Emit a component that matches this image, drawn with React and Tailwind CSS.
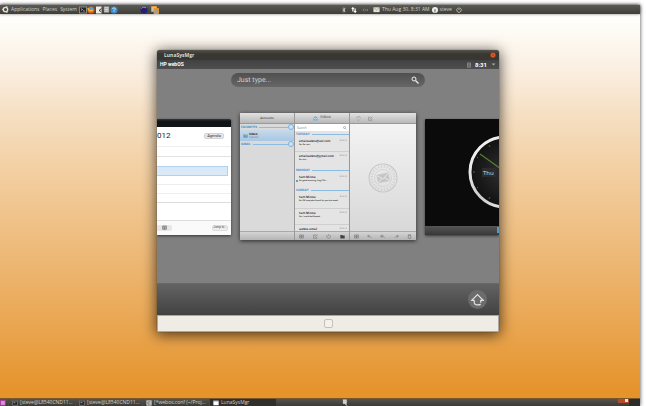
import React from "react";

function Icon({ className = "", children, label }) {
  return (
    <svg viewBox="0 0 16 16" className={"shrink-0 " + className} fill="none" stroke="currentColor" strokeWidth="2" role="img" aria-label={label}>
      {children}
    </svg>
  );
}

function TopPanel() {
  return (
    <header className="flex h-[9px] shrink-0 items-center bg-linear-to-b from-[#5b5b54] to-[#3f3e39] text-[5px] leading-none text-[#d5d1c8] shadow-[0_0_3px_#0008]">
      <nav className="flex flex-1 items-center pl-[2px]">
        <Icon label="Ubuntu" className="mr-[2px] size-[7px] text-[#e5e1d8]">
          <circle cx="8" cy="8" r="5" strokeWidth="3" />
          <circle cx="2" cy="8" r="1" /><circle cx="11" cy="2" r="1" /><circle cx="11" cy="14" r="1" />
        </Icon>
        <button className="mr-[3px]">Applications</button>
        <button className="mr-[3px]">Places</button>
        <button className="mr-[2px]">System</button>
        <Icon label="Terminal" className="size-[8px]">
          <rect x="1" y="2" width="14" height="12" fill="#252a28" stroke="#888" />
          <path d="M4 5l3 2-3 2M8 10h4" stroke="#fff" strokeWidth="1" />
        </Icon>
        <Icon label="Firefox" className="size-[8px]">
          <circle cx="8" cy="8" r="7" fill="#df5a18" stroke="none" />
          <circle cx="8" cy="6" r="4" fill="#4ba2dc" stroke="none" />
          <path d="M2 4c1 6 5 7 10 4" stroke="#fbb02f" strokeWidth="3" />
        </Icon>
        <Icon label="Text editor" className="size-[8px]">
          <path d="M2 1h11v14H2z" fill="#ecece6" stroke="none" />
          <path d="M13 5L8 9l4 2" stroke="#333" />
        </Icon>
        <Icon label="Calculator" className="size-[7px]">
          <path d="M2 1h12v14H2z" fill="#aaa" stroke="none" />
          <path d="M4 4h8M4 8h8M4 12h8" stroke="#ddd" />
        </Icon>
        <Icon label="Help" className="size-[8px]">
          <circle cx="8" cy="8" r="7" fill="#3f8cca" stroke="none" />
          <path d="M5 6c1-4 7-2 5 1L8 9v2" stroke="#d5edff" />
        </Icon>
        <Icon label="Eclipse" className="ml-[22px] size-[8px]">
          <circle cx="8" cy="8" r="7" fill="#24206e" stroke="none" />
          <path d="M3 5c2-3 6-4 9-1" stroke="#aaa8df" />
        </Icon>
        <Icon label="Virtual machine" className="ml-[3px] size-[8px]">
          <path d="M1 1h10v10H1z" fill="#cfc2ad" stroke="#e6942f" />
          <path d="M6 5h9v10H6z" fill="#98a0a5" stroke="#e6942f" />
        </Icon>
      </nav>
      <div className="flex w-[299px] items-center">
        <Icon label="Bluetooth" className="size-[6px]"><path d="M4 5l7 6-3 3V2l3 3-7 6" /></Icon>
        <Icon label="Network" className="ml-[4px] size-[6px] text-white"><path d="M5 12V2M2 5l3-3 3 3M11 4v10M8 11l3 3 3-3" strokeWidth="3" /></Icon>
        <Icon label="Sound" className="ml-[5px] size-[6px] text-[#999]"><path d="M6 4L2 8l4 4M10 6v4M14 5v6" /></Icon>
        <Icon label="Mail" className="ml-[5px] size-[7px]"><path d="M1 3h14v11H1z" fill="#e5e1d8" stroke="none" /><path d="M2 4l6 5 6-5" stroke="#666" strokeWidth="1" /></Icon>
        <time className="ml-[2px] whitespace-nowrap">Thu Aug 30, 8:31 AM</time>
        <Icon label="User" className="mr-[2px] ml-[2px] size-[6px]"><circle cx="8" cy="8" r="8" fill="#eee" stroke="none" /><circle cx="8" cy="8" r="2" fill="#555" stroke="none" /><path d="M8 9v6" stroke="#555" /></Icon>
        <span>steve</span>
        <Icon label="Power" className="ml-[4px] size-[6px]"><path d="M5 3a6 6 0 1 0 6 0M8 1v7" /></Icon>
      </div>
    </header>
  );
}

function CalendarCard() {
  return (
    <article className="flex h-[116px] w-[74px] shrink-0 flex-col overflow-hidden rounded-r-[1px] bg-white font-[Roboto,sans-serif] shadow-[0_1px_3px_#0009]">
      <div className="h-[8px] shrink-0 bg-linear-to-b from-[#35383a] to-[#111517] to-30%" />
      <div className="flex h-[18px] shrink-0 items-center justify-between pr-[7px] text-[8px] leading-none text-[#222]">
        <h2>012</h2>
        <button className="h-[6px] w-[20px] rounded-[2px] border border-[#d4d4d4] bg-[#e6e6e6] text-[4px] leading-none text-[#333]">Agenda</button>
      </div>
      <div className="h-[2px] shrink-0 border-b border-[#eee]" />
      <div className="h-[10px] shrink-0 border-b border-[#e3e3e3]" />
      <div className="h-[9px] shrink-0" />
      <div className="mr-[3px] h-[10px] shrink-0 border border-l-0 border-[#b4d2ee] bg-[#d9e9f8]" />
      <div className="h-[9px] shrink-0 border-b border-[#eee]" />
      <div className="h-[9px] shrink-0 border-b border-[#eee]" />
      <div className="h-[9px] shrink-0 border-b border-[#ddd]" />
      <div className="h-[18px] shrink-0 border-b border-[#ddd]" />
      <footer className="flex flex-1 items-center justify-between bg-[#fafafa] pr-[3px]">
        <button aria-label="Month" className="flex h-[6px] w-[15px] items-center justify-center rounded-r-[2px] bg-[#e6e6e6] text-[#666]">
          <Icon className="size-[5px]"><path d="M2 3h12v11H2zM2 6h12M2 10h12M8 6v8" /></Icon>
        </button>
        <button className="h-[6px] w-[16px] rounded-[2px] border border-[#ddd] bg-[#eee] text-[3px] leading-none whitespace-nowrap text-[#444]">Jump to...</button>
      </footer>
    </article>
  );
}

function Divider({ children, knob }) {
  return (
    <div className="flex h-[6px] shrink-0 items-center gap-[2px] pl-[1px] text-[3px] leading-none font-bold text-[#3d8fca]">
      <span>{children}</span>
      <span className="h-px flex-1 bg-[#8abce4]" />
      {knob && <span className="-ml-[2px] size-[6px] rounded-full border border-[#78b1e0] bg-[#cfe3f5]" />}
    </div>
  );
}

function Message({ from, subject, size = "h-[16px] border-b", unread }) {
  return (
    <div className={size + " shrink-0 border-[#cfcfcf] pt-[2px] pr-[2px] pl-[4px] whitespace-nowrap text-[#111]"}>
      <div className="flex items-center justify-between text-[3px] leading-[4px]">
        <span className="font-semibold">{from}</span>
        <span className="text-[2px] text-[#777]">8/30/12</span>
      </div>
      {subject && (
        <div className="flex items-center text-[2px] leading-[4px] font-semibold text-[#111]">
          {unread && <span className="-ml-[3px] mr-px size-[2px] rounded-full bg-[#318ac9]" />}
          {subject}
        </div>
      )}
    </div>
  );
}

const bar = "flex h-[11px] shrink-0 items-center bg-linear-to-b from-[#e2e2e2] to-[#b8b8b8] border-b border-[#999] text-[#444] ";
const foot = "flex h-[9px] shrink-0 items-center justify-around bg-linear-to-b from-[#d5d5d5] to-[#b5b5b5] border-t border-[#aaa] text-[#777] ";

function MailCard() {
  return (
    <article className="flex h-[127px] w-[176px] shrink-0 overflow-hidden rounded-[1px] bg-[#dadada] text-[4px] leading-none shadow-[0_1px_4px_#000a] [text-rendering:geometricPrecision]">
      <section className="flex w-[55px] flex-col border-r border-[#999]">
        <h2 className={bar + "justify-center text-[3px] font-semibold"}>Accounts</h2>
        <Divider knob>FAVORITES</Divider>
        <div className="flex h-[11px] shrink-0 items-center gap-px bg-linear-to-b from-[#c6d9ea] to-[#a8c7e3] pl-[3px] text-[#222]">
          <Icon className="size-[5px]"><path d="M1 5h14v10H1z" fill="#5d9ed3" stroke="none" /><path d="M5 3l4 5 5-3" stroke="#edc948" /></Icon>
          <div className="text-[3px]">
            <p className="font-bold">Inbox</p>
            <p className="text-[#777]">Yahoo!</p>
          </div>
        </div>
        <Divider knob>GMAIL</Divider>
        <div className="flex-1" />
        <div className={foot} />
      </section>
      <section className="flex w-[55px] flex-col border-r border-[#999] bg-[#e4e4e4]">
        <h2 className={bar + "justify-center gap-[2px] text-[4px]"}>
          <Icon className="size-[5px]"><path d="M1 5l7-4 7 4v9H1z" fill="#68afe2" stroke="none" /><path d="M2 6l6 4 6-4" stroke="#fff" /></Icon>
          Inbox
        </h2>
        <label className="flex h-[7px] shrink-0 items-center bg-white px-[2px] text-[#777]">
          <input aria-label="Search mail" placeholder="Search" className="h-full w-0 flex-1 bg-transparent text-[3px] leading-none outline-none placeholder:text-[#777]" />
          <Icon className="size-[4px]"><circle cx="6" cy="6" r="4" /><path d="M9 9l5 5" /></Icon>
        </label>
        <div className="flex flex-1 flex-col">
          <Divider>TUESDAY</Divider>
          <Message from="emailwebos@aol.com" subject="Fw: Re: test" size="h-[15px] border-b" />
          <Message from="emailwebos@gmail.com" subject="Re: test" size="h-[15px]" />
          <Divider>MONDAY</Divider>
          <Message from="Sam Minow" subject="Re: good morning, Aug 27th..." size="h-[14px]" unread />
          <Divider>SUNDAY</Divider>
          <Message from="Sam Minow" subject="Re: FW new jobs found for you this week" />
          <Message from="Sam Minow" subject="Fw: I could be Blessed" />
          <Message from="webos.email" size="h-[6px]" />
        </div>
        <div className={foot}>
          <Icon className="size-[5px]"><path d="M2 3h12v10H2zM2 8h12M8 3v10" /></Icon>
          <Icon className="size-[5px]"><path d="M12 9v5H2V3h8M7 9l8-7" /></Icon>
          <Icon className="size-[5px]"><path d="M4 3a6 6 0 1 0 8 0M8 1v5" /></Icon>
          <Icon className="size-[5px]"><path d="M1 3h6l2 2h6v9H1z" fill="#444" stroke="none" /></Icon>
        </div>
      </section>
      <section className="flex flex-1 flex-col">
        <div className={bar + "gap-[7px] pl-[6px]"}>
          <Icon label="Refresh" className="size-[5px] text-[#888]"><path d="M2 7c1-7 11-7 12 0M11 12c-2 3-6 2-7 0" /></Icon>
          <Icon label="Compose" className="size-[5px] text-[#888]"><path d="M12 9v5H2V4h6M6 10l8-8" /></Icon>
        </div>
        <div className="flex flex-1 items-center justify-center bg-linear-to-b from-[#f3f3f3] to-[#d8d8d8]">
          <svg viewBox="0 0 60 60" className="size-[30px] -rotate-12 text-[#c6c6c6]" fill="none" stroke="currentColor">
            <circle cx="30" cy="30" r="28" strokeWidth="2" />
            <circle cx="30" cy="30" r="23" strokeWidth="5" strokeDasharray="3 3" opacity=".55" />
            <circle cx="30" cy="30" r="17" strokeWidth="1" />
            <path d="M19 22h23v16H19z" fill="currentColor" />
            <path d="M19 23l11 9 12-9M19 38l8-8M42 38l-9-8" stroke="#eee" strokeWidth="1.5" />
          </svg>
        </div>
        <div className={foot}>
          <Icon className="size-[5px]"><path d="M2 3h12v10H2zM2 8h12M8 3v10" /></Icon>
          <Icon className="size-[5px]"><path d="M7 3L2 7l5 4M2 7h7l5 5" /></Icon>
          <Icon className="size-[5px]"><path d="M6 3L1 7l5 4M10 3L5 7l5 4M6 7h4l5 5" /></Icon>
          <Icon className="size-[5px]"><path d="M9 3l5 4-5 4M14 7H7l-5 5" /></Icon>
          <Icon className="size-[5px]"><path d="M4 5h8v9H4zM3 3h10" /></Icon>
        </div>
      </section>
    </article>
  );
}

function ClockCard() {
  return (
    <article className="flex h-[116px] w-[74px] shrink-0 flex-col overflow-hidden rounded-l-[1px] bg-[#0b0b0b] shadow-[0_1px_3px_#0009]">
      <svg viewBox="0 0 74 107" className="h-[107px] w-[74px]" role="img" aria-label="Clock">
        <defs>
          <linearGradient id="rim" x1="0" y1="0" x2="1" y2="1">
            <stop offset="0" stopColor="#fff" /><stop offset=".5" stopColor="#ccc" /><stop offset="1" stopColor="#fff" />
          </linearGradient>
          <radialGradient id="dial"><stop offset="0" stopColor="#303030" /><stop offset="1" stopColor="#111" /></radialGradient>
        </defs>
        <circle cx="80" cy="53" r="35" fill="url(#dial)" stroke="url(#rim)" strokeWidth="3" />
        <path d="M55 35L76 50" stroke="#587f31" strokeWidth="1.2" />
        <path d="M64 26l1 2M52 38l1 1M48 53h2M52 69l1-1M64 80l1-2" stroke="#49652f" />
        <rect x="57" y="49" width="14" height="9" fill="#2c2c2c" />
        <text x="58" y="56" fill="#ddd" fontSize="6" fontFamily="Open Sans, sans-serif">Thu</text>
      </svg>
      <div className="flex flex-1 items-center justify-end bg-linear-to-b from-[#555] to-[#383838]">
        <span className="h-[6px] w-[2px] bg-[#539bc7]" />
      </div>
    </article>
  );
}

function WebosWindow() {
  return (
    <section className="flex h-[282px] w-full max-w-[342px] flex-col rounded-t-[3px] bg-[#808080] shadow-[0_2px_14px_1px_#000a,0_0_1px_#333]">
      <div className="flex h-[10px] shrink-0 items-center justify-between rounded-t-[3px] bg-linear-to-b from-[#55534c] to-[#383731] to-40% pr-[3px] pl-[7px] text-[5px] leading-none font-bold text-[#dfdbd2]">
        <h1>LunaSysMgr</h1>
        <button aria-label="Close" className="size-[6px] rounded-full text-[#712b11]">
          <Icon className="size-[6px]"><circle cx="8" cy="8" r="7" fill="#e65e29" strokeWidth="1" /><path d="M5 5l6 6M11 5l-6 6" strokeWidth="1" /></Icon>
        </button>
      </div>
      <div className="flex h-[9px] shrink-0 items-center bg-linear-to-b from-[#424242] to-[#4e4e4e] pr-[3px] pl-[3px] font-[Roboto,sans-serif] text-[5px] leading-none font-bold text-white">
        <span className="flex-1">HP webOS</span>
        <Icon label="Battery" className="size-[6px] text-[#999]"><path d="M4 3h8v11H4zM7 1h2M6 7h4M6 10h4" /></Icon>
        <span className="ml-[3px] text-[6px]">8:31</span>
        <Icon label="Menu" className="ml-[4px] size-[5px] text-[#aaa]"><path d="M2 5h12l-6 6z" fill="currentColor" stroke="none" /></Icon>
      </div>
      <div className="flex h-[214px] flex-col items-center overflow-hidden pt-[4px]">
        <label className="flex h-[14px] w-[194px] shrink-0 items-center rounded-full bg-linear-to-b from-[#505050] to-[#666] px-[6px] text-[#d5d5d5]">
          <input aria-label="Search" placeholder="Just type..." className="h-full min-w-0 flex-1 bg-transparent font-[Roboto,sans-serif] text-[7px] leading-none outline-none [text-rendering:geometricPrecision] placeholder:text-[#d0d0d0]" />
          <Icon className="size-[8px] text-[#eee]"><circle cx="6" cy="6" r="4" /><path d="M9 9l6 6" strokeWidth="2.5" /></Icon>
        </label>
        <div className="mt-[26px] flex items-center justify-center gap-[9px]">
          <CalendarCard />
          <MailCard />
          <ClockCard />
        </div>
      </div>
      <div className="flex h-[32px] shrink-0 items-center justify-end border-t border-[#686868] bg-linear-to-b from-[#636363] to-[#424242] pr-[12px]">
        <button aria-label="Launcher" className="flex size-[19px] items-center justify-center rounded-full bg-[#6c6c6c] text-[#e2e2e2]">
          <Icon className="size-[13px]"><path d="M4 9H1l7-7 7 7h-3v3M4 9v3c0 3 5 3 8 2" strokeWidth="1.5" /></Icon>
        </button>
      </div>
      <div className="flex h-[17px] shrink-0 items-center justify-center border border-[#aaa7a0] bg-[#efebe5]">
        <button aria-label="Home" className="size-[9px] rounded-[2px] border border-[#c4c0b9] bg-[#f4f1ed]" />
      </div>
    </section>
  );
}

function Task({ children, kind, active }) {
  return (
    <button className={"flex h-full w-[67px] shrink-0 items-center gap-[2px] border-l border-[#4a4944] pl-[3px] whitespace-nowrap " + (active ? "bg-[#302f2b]" : "")}>
      <Icon className="size-[6px]">
        {kind === "term" && <><rect x="1" y="3" width="14" height="11" fill="#292929" stroke="#777" /><path d="M4 7h5" stroke="#bbb" /></>}
        {kind === "edit" && <><rect x="1" y="1" width="14" height="14" fill="#ccc" stroke="none" /><path d="M12 5H5v6h7" stroke="#555" /></>}
        {kind === "window" && <><rect x="1" y="2" width="14" height="12" fill="#fff" stroke="none" /><path d="M1 3h14" stroke="#64a1d6" /></>}
      </Icon>
      {children}
    </button>
  );
}

function Taskbar() {
  return (
    <footer className="flex h-[8px] shrink-0 items-center border-t border-[#77572b] bg-linear-to-b from-[#55544e] to-[#3b3a35] text-[5px] leading-none text-[#d2cec5]">
      <div className="flex h-full w-[8px] items-center">
        <Icon label="Show desktop" className="size-[6px]"><rect x="1" y="1" width="13" height="13" fill="#e28be0" stroke="#9a3d98" /></Icon>
      </div>
      <Task kind="term">[steve@L8540CND11...</Task>
      <Task kind="term">[steve@L8540CND11...</Task>
      <Task kind="edit">[*webos.conf (~/Proj...</Task>
      <Task kind="window" active>LunaSysMgr</Task>
      <div className="flex flex-1 items-center pl-[66px]">
        <Icon label="Tray" className="size-[7px]"><path d="M2 1h9v10H2z" fill="#ccd1cf" stroke="none" /><path d="M6 10l6 5" stroke="#eee" /></Icon>
      </div>
      <div className="flex h-[4px] w-[11px] justify-end self-start bg-[#b34c2c] pr-px"><span className="size-[3px] bg-[#f0ddd5]" /></div>
      <div className="h-full w-[11px] bg-[#2c2c2b]" />
    </footer>
  );
}

export default function App() {
  return (
    <div className="h-screen overflow-hidden bg-white pt-[5px] pr-[6px] font-['Open_Sans',sans-serif]">
      <div className="flex h-full flex-col bg-[linear-gradient(#fffefa_4%,#fbf0e3_15%,#f5dcbc_30%,#f2cb9a_45%,#edb978_62%,#eaa855_78%,#e5932a_97%)] shadow-[0_0_4px_#000b]">
        <TopPanel />
        <main className="flex min-h-0 flex-1 items-start justify-center pt-[36px] pl-[16px]">
          <WebosWindow />
        </main>
        <Taskbar />
      </div>
    </div>
  );
}
